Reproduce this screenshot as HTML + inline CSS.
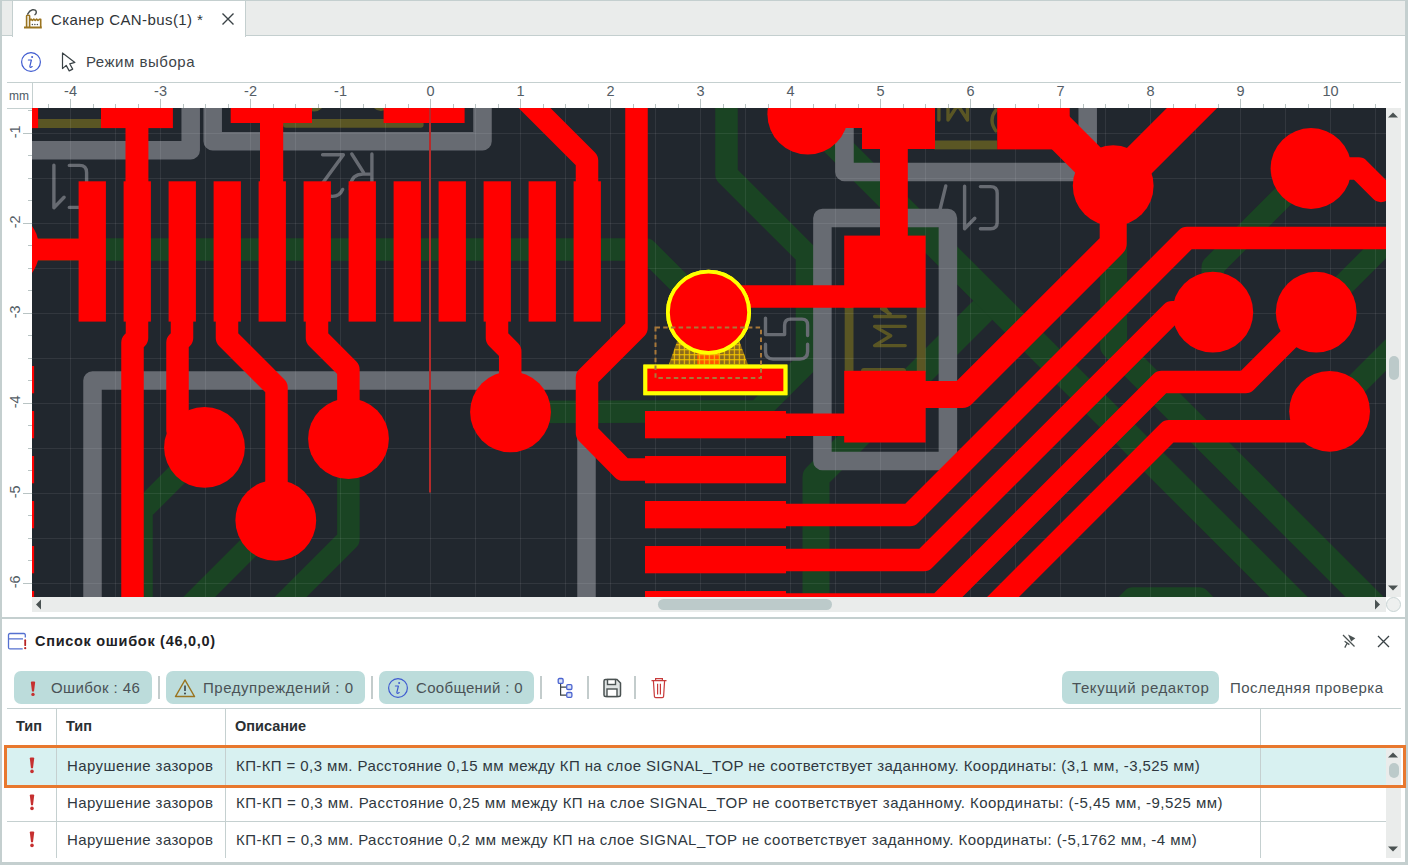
<!DOCTYPE html>
<html><head><meta charset="utf-8">
<style>
*{margin:0;padding:0;box-sizing:border-box}
html,body{width:1408px;height:865px;overflow:hidden;background:#fff;font-family:"Liberation Sans",sans-serif;color:#3d4448}
.a{position:absolute}
.t{position:absolute;white-space:nowrap;line-height:1}
.btn{position:absolute;background:#bcdcdb;border-radius:7px}
.sep{position:absolute;width:2px;background:#c3cccc}
.vl{position:absolute;width:1px;background:#c5d0d0}
.hl{position:absolute;height:1px;background:#c5d0d0}
</style></head><body>
<!-- borders -->
<div class="a" style="left:0;top:0;width:1408px;height:1px;background:#c4cfcf"></div>
<div class="a" style="left:0;top:0;width:2px;height:865px;background:#c4cfcf"></div>
<div class="a" style="left:1405px;top:0;width:3px;height:865px;background:#c4cfcf"></div>
<div class="a" style="left:0;top:862px;width:1408px;height:3px;background:#c4cfcf"></div>
<!-- tab bar -->
<div class="a" style="left:2px;top:1px;width:1403px;height:35px;background:#eaeceb;border-bottom:1px solid #c4cfcf"></div>
<div class="a" style="left:12px;top:1px;width:234px;height:36px;background:#fff;border-left:1px solid #c4cfcf;border-right:1px solid #c4cfcf"></div>
<div id="tabtitle" class="t" style="letter-spacing:0.42px;left:51px;top:12px;font-size:15px;color:#2f3538">Сканер CAN-bus(1) *</div>
<!-- factory icon -->
<svg class="a" style="left:22px;top:7px" width="22" height="22" viewBox="0 0 22 22"><path d="M4.6 20.3 L4.6 9 Q4.6 8.3 5.3 8.3 L6.9 8.3 Q7.6 8.3 7.6 9 L7.6 20.3" fill="none" stroke="#9a7420" stroke-width="1.6"/><path d="M7.6 13.5 L9 12.2 L10.4 13.5 L11.8 12.2 L13.2 13.5 L14.6 12.2 L16 13.5 L17.6 12.2 L18.7 12.2 L18.7 20.3" fill="none" stroke="#9a7420" stroke-width="1.6" stroke-linejoin="round"/><path d="M2 20.5 L19.8 20.5" stroke="#9a7420" stroke-width="2"/><circle cx="10.4" cy="17.5" r="0.75" fill="#4a5050"/><circle cx="12.9" cy="17.5" r="0.75" fill="#4a5050"/><circle cx="15.4" cy="17.5" r="0.75" fill="#4a5050"/><path d="M5.7 7 Q7.5 3.5 10.5 2.8 Q14 2.3 14.3 5 Q14.3 7 13 7.6" fill="none" stroke="#4a5050" stroke-width="1.5" stroke-linecap="round"/></svg>
<svg class="a" style="left:221px;top:12px" width="14" height="14" viewBox="0 0 14 14"><path d="M1.5 1.5 L12.5 12.5 M12.5 1.5 L1.5 12.5" stroke="#3a4246" stroke-width="1.4"/></svg>
<!-- toolbar -->
<svg class="a" style="left:20px;top:51px" width="22" height="22" viewBox="0 0 22 22"><circle cx="11" cy="11" r="9.4" fill="none" stroke="#3f5bd0" stroke-width="1.2"/><path d="M8.4 9 L11.4 9 L9.9 15.2 Q9.6 16.6 11 16.3 L12.2 15.6" fill="none" stroke="#3f5bd0" stroke-width="1.2" stroke-linejoin="round" stroke-linecap="round"/><circle cx="12.1" cy="5.9" r="1" fill="#3f5bd0"/></svg>
<svg class="a" style="left:60px;top:52px" width="18" height="20" viewBox="0 0 18 20"><path d="M2.5 1 L2.5 16.6 L6.2 13.4 L9.2 18.9 L12.7 17.1 L9.7 11.8 L14.9 10.4 Z" fill="none" stroke="#3a4246" stroke-width="1.2" stroke-linejoin="round"/></svg>
<div id="mode" class="t" style="letter-spacing:0.52px;left:86px;top:54px;font-size:15px;color:#3d4448">Режим выбора</div>
<!-- ruler -->
<div class="hl" style="left:7px;top:82px;width:1394px"></div>
<div class="hl" style="left:7px;top:108px;width:25px"></div>
<div class="vl" style="left:32px;top:83px;height:25px"></div>
<div class="t" style="left:9px;top:90px;font-size:12px;color:#4d5a66">mm</div>
<svg class="a" style="left:0;top:0" width="1408" height="865" viewBox="0 0 1408 865">
<rect x="48" y="104" width="1" height="4" fill="#b9c4c4"/>
<rect x="70" y="99" width="1" height="9" fill="#b9c4c4"/>
<text x="70.5" y="96" text-anchor="middle" font-size="14.5" fill="#545d66">-4</text>
<rect x="93" y="104" width="1" height="4" fill="#b9c4c4"/>
<rect x="115" y="104" width="1" height="4" fill="#b9c4c4"/>
<rect x="138" y="104" width="1" height="4" fill="#b9c4c4"/>
<rect x="160" y="99" width="1" height="9" fill="#b9c4c4"/>
<text x="160.5" y="96" text-anchor="middle" font-size="14.5" fill="#545d66">-3</text>
<rect x="183" y="104" width="1" height="4" fill="#b9c4c4"/>
<rect x="205" y="104" width="1" height="4" fill="#b9c4c4"/>
<rect x="228" y="104" width="1" height="4" fill="#b9c4c4"/>
<rect x="250" y="99" width="1" height="9" fill="#b9c4c4"/>
<text x="250.5" y="96" text-anchor="middle" font-size="14.5" fill="#545d66">-2</text>
<rect x="273" y="104" width="1" height="4" fill="#b9c4c4"/>
<rect x="295" y="104" width="1" height="4" fill="#b9c4c4"/>
<rect x="318" y="104" width="1" height="4" fill="#b9c4c4"/>
<rect x="340" y="99" width="1" height="9" fill="#b9c4c4"/>
<text x="340.5" y="96" text-anchor="middle" font-size="14.5" fill="#545d66">-1</text>
<rect x="363" y="104" width="1" height="4" fill="#b9c4c4"/>
<rect x="385" y="104" width="1" height="4" fill="#b9c4c4"/>
<rect x="408" y="104" width="1" height="4" fill="#b9c4c4"/>
<rect x="430" y="99" width="1" height="9" fill="#b9c4c4"/>
<text x="430.5" y="96" text-anchor="middle" font-size="14.5" fill="#545d66">0</text>
<rect x="453" y="104" width="1" height="4" fill="#b9c4c4"/>
<rect x="475" y="104" width="1" height="4" fill="#b9c4c4"/>
<rect x="498" y="104" width="1" height="4" fill="#b9c4c4"/>
<rect x="520" y="99" width="1" height="9" fill="#b9c4c4"/>
<text x="520.5" y="96" text-anchor="middle" font-size="14.5" fill="#545d66">1</text>
<rect x="543" y="104" width="1" height="4" fill="#b9c4c4"/>
<rect x="565" y="104" width="1" height="4" fill="#b9c4c4"/>
<rect x="588" y="104" width="1" height="4" fill="#b9c4c4"/>
<rect x="610" y="99" width="1" height="9" fill="#b9c4c4"/>
<text x="610.5" y="96" text-anchor="middle" font-size="14.5" fill="#545d66">2</text>
<rect x="633" y="104" width="1" height="4" fill="#b9c4c4"/>
<rect x="655" y="104" width="1" height="4" fill="#b9c4c4"/>
<rect x="678" y="104" width="1" height="4" fill="#b9c4c4"/>
<rect x="700" y="99" width="1" height="9" fill="#b9c4c4"/>
<text x="700.5" y="96" text-anchor="middle" font-size="14.5" fill="#545d66">3</text>
<rect x="723" y="104" width="1" height="4" fill="#b9c4c4"/>
<rect x="745" y="104" width="1" height="4" fill="#b9c4c4"/>
<rect x="768" y="104" width="1" height="4" fill="#b9c4c4"/>
<rect x="790" y="99" width="1" height="9" fill="#b9c4c4"/>
<text x="790.5" y="96" text-anchor="middle" font-size="14.5" fill="#545d66">4</text>
<rect x="813" y="104" width="1" height="4" fill="#b9c4c4"/>
<rect x="835" y="104" width="1" height="4" fill="#b9c4c4"/>
<rect x="858" y="104" width="1" height="4" fill="#b9c4c4"/>
<rect x="880" y="99" width="1" height="9" fill="#b9c4c4"/>
<text x="880.5" y="96" text-anchor="middle" font-size="14.5" fill="#545d66">5</text>
<rect x="903" y="104" width="1" height="4" fill="#b9c4c4"/>
<rect x="925" y="104" width="1" height="4" fill="#b9c4c4"/>
<rect x="948" y="104" width="1" height="4" fill="#b9c4c4"/>
<rect x="970" y="99" width="1" height="9" fill="#b9c4c4"/>
<text x="970.5" y="96" text-anchor="middle" font-size="14.5" fill="#545d66">6</text>
<rect x="993" y="104" width="1" height="4" fill="#b9c4c4"/>
<rect x="1015" y="104" width="1" height="4" fill="#b9c4c4"/>
<rect x="1038" y="104" width="1" height="4" fill="#b9c4c4"/>
<rect x="1060" y="99" width="1" height="9" fill="#b9c4c4"/>
<text x="1060.5" y="96" text-anchor="middle" font-size="14.5" fill="#545d66">7</text>
<rect x="1083" y="104" width="1" height="4" fill="#b9c4c4"/>
<rect x="1105" y="104" width="1" height="4" fill="#b9c4c4"/>
<rect x="1128" y="104" width="1" height="4" fill="#b9c4c4"/>
<rect x="1150" y="99" width="1" height="9" fill="#b9c4c4"/>
<text x="1150.5" y="96" text-anchor="middle" font-size="14.5" fill="#545d66">8</text>
<rect x="1173" y="104" width="1" height="4" fill="#b9c4c4"/>
<rect x="1195" y="104" width="1" height="4" fill="#b9c4c4"/>
<rect x="1218" y="104" width="1" height="4" fill="#b9c4c4"/>
<rect x="1240" y="99" width="1" height="9" fill="#b9c4c4"/>
<text x="1240.5" y="96" text-anchor="middle" font-size="14.5" fill="#545d66">9</text>
<rect x="1263" y="104" width="1" height="4" fill="#b9c4c4"/>
<rect x="1285" y="104" width="1" height="4" fill="#b9c4c4"/>
<rect x="1308" y="104" width="1" height="4" fill="#b9c4c4"/>
<rect x="1330" y="99" width="1" height="9" fill="#b9c4c4"/>
<text x="1330.5" y="96" text-anchor="middle" font-size="14.5" fill="#545d66">10</text>
<rect x="1353" y="104" width="1" height="4" fill="#b9c4c4"/>
<rect x="1375" y="104" width="1" height="4" fill="#b9c4c4"/>
<rect x="28" y="110" width="4" height="1" fill="#b9c4c4"/>
<rect x="23" y="133" width="9" height="1" fill="#b9c4c4"/>
<text transform="translate(19.6 131.9) rotate(-90)" text-anchor="middle" font-size="14.5" fill="#545d66">-1</text>
<rect x="28" y="155" width="4" height="1" fill="#b9c4c4"/>
<rect x="28" y="178" width="4" height="1" fill="#b9c4c4"/>
<rect x="28" y="200" width="4" height="1" fill="#b9c4c4"/>
<rect x="28" y="110" width="4" height="1" fill="#b9c4c4"/>
<rect x="23" y="223" width="9" height="1" fill="#b9c4c4"/>
<text transform="translate(19.6 221.9) rotate(-90)" text-anchor="middle" font-size="14.5" fill="#545d66">-2</text>
<rect x="28" y="245" width="4" height="1" fill="#b9c4c4"/>
<rect x="28" y="268" width="4" height="1" fill="#b9c4c4"/>
<rect x="28" y="290" width="4" height="1" fill="#b9c4c4"/>
<rect x="23" y="313" width="9" height="1" fill="#b9c4c4"/>
<text transform="translate(19.6 311.9) rotate(-90)" text-anchor="middle" font-size="14.5" fill="#545d66">-3</text>
<rect x="28" y="335" width="4" height="1" fill="#b9c4c4"/>
<rect x="28" y="358" width="4" height="1" fill="#b9c4c4"/>
<rect x="28" y="380" width="4" height="1" fill="#b9c4c4"/>
<rect x="23" y="403" width="9" height="1" fill="#b9c4c4"/>
<text transform="translate(19.6 401.9) rotate(-90)" text-anchor="middle" font-size="14.5" fill="#545d66">-4</text>
<rect x="28" y="425" width="4" height="1" fill="#b9c4c4"/>
<rect x="28" y="448" width="4" height="1" fill="#b9c4c4"/>
<rect x="28" y="470" width="4" height="1" fill="#b9c4c4"/>
<rect x="23" y="493" width="9" height="1" fill="#b9c4c4"/>
<text transform="translate(19.6 491.9) rotate(-90)" text-anchor="middle" font-size="14.5" fill="#545d66">-5</text>
<rect x="28" y="515" width="4" height="1" fill="#b9c4c4"/>
<rect x="28" y="538" width="4" height="1" fill="#b9c4c4"/>
<rect x="28" y="560" width="4" height="1" fill="#b9c4c4"/>
<rect x="23" y="583" width="9" height="1" fill="#b9c4c4"/>
<text transform="translate(19.6 581.9) rotate(-90)" text-anchor="middle" font-size="14.5" fill="#545d66">-6</text>
</svg>
<!-- canvas placeholder -->
<svg class="a" style="left:32px;top:108px" width="1354" height="489" viewBox="32 108 1354 489">
<rect x="32" y="108" width="1354" height="489" fill="#21272e" />
<path d="M20 249.5 L646 249.5 L708.5 312" fill="none" stroke="#1a4423" stroke-width="22.5" stroke-linejoin="round" stroke-linecap="round" />
<path d="M204.5 447.4 L141.5 510.4 L141.5 620" fill="none" stroke="#1a4423" stroke-width="22.5" stroke-linejoin="round" stroke-linecap="round" />
<path d="M275.8 520.4 L180 616.2" fill="none" stroke="#1a4423" stroke-width="22.5" stroke-linejoin="round" stroke-linecap="round" />
<path d="M348.4 438.7 L348.4 539.2 L270 617.6" fill="none" stroke="#1a4423" stroke-width="22.5" stroke-linejoin="round" stroke-linecap="round" />
<path d="M510.5 411.9 L758 411.2 L807 362.2 L807 255 L726.5 174.5 L726.5 90" fill="none" stroke="#1a4423" stroke-width="22.5" stroke-linejoin="round" stroke-linecap="round" />
<path d="M816 620 L816 477 L992.3 300.7" fill="none" stroke="#1a4423" stroke-width="27" stroke-linejoin="round" stroke-linecap="round" />
<path d="M830 138.4 L1420 728.4" fill="none" stroke="#1a4423" stroke-width="27" stroke-linejoin="round" stroke-linecap="round" />
<path d="M1113.6 200 L1113.6 346 L1420 652.4" fill="none" stroke="#1a4423" stroke-width="27" stroke-linejoin="round" stroke-linecap="round" />
<path d="M1212.8 312.2 L1212.8 266.7 L1311 168.5" fill="none" stroke="#1a4423" stroke-width="22.5" stroke-linejoin="round" stroke-linecap="round" />
<path d="M1316.2 312.2 L1420 208.4" fill="none" stroke="#1a4423" stroke-width="22.5" stroke-linejoin="round" stroke-linecap="round" />
<path d="M1329.6 411.3 L1420 320.9" fill="none" stroke="#1a4423" stroke-width="22.5" stroke-linejoin="round" stroke-linecap="round" />
<path d="M1080 652 L1133 598.5 L1199 598.5 L1252 652" fill="none" stroke="#1a4423" stroke-width="22.5" stroke-linejoin="round" stroke-linecap="round" />
<path d="M20 150.2 L190.7 150.2 L190.7 90" fill="none" stroke="#676b72" stroke-width="18.5" stroke-linejoin="round" stroke-linecap="butt" />
<path d="M212.7 90 L212.7 141.2 L482.5 141.2 L482.5 90" fill="none" stroke="#676b72" stroke-width="18.5" stroke-linejoin="round" stroke-linecap="butt" />
<path d="M92.5 620 L92.5 380.5 L586.5 380.5 L586.5 620" fill="none" stroke="#676b72" stroke-width="18.5" stroke-linejoin="round" stroke-linecap="butt" />
<path d="M844.5 90 L844.5 172 L1087.7 172 L1087.7 90" fill="none" stroke="#676b72" stroke-width="18.5" stroke-linejoin="round" stroke-linecap="butt" />
<path d="M822.4 218 L947.9 218 L947.9 461 L822.4 461 Z" fill="none" stroke="#676b72" stroke-width="18.5" stroke-linejoin="round"/>
<rect x="38" y="119" width="134" height="9" fill="#5a5624" />
<rect x="283" y="119" width="140.6" height="8.7" rx="3" fill="#5a5624"/>
<rect x="934.5" y="140.5" width="62.7" height="8.9" fill="#5a5624" />
<rect x="844.7" y="300" width="8.8" height="72" fill="#5a5624" />
<rect x="916.8" y="300" width="8.8" height="72" fill="#5a5624" />
<path d="M53.9 165.3 L53.9 207.7 L64.1 197.3" fill="none" stroke="#676b72" stroke-width="3.4" stroke-linecap="round" stroke-linejoin="round"/>
<path d="M69.3 165.4 L79.5 165.4 Q86.6 165.4 86.6 172.5 L86.6 200 Q86.6 207.4 79.5 207.4 L69.3 207.4" fill="none" stroke="#676b72" stroke-width="3.4" stroke-linecap="round" stroke-linejoin="round"/>
<path d="M322.6 154.7 L343.4 154.7 L322 184 M331 196.3 Q339.5 197 342.7 189.4" fill="none" stroke="#676b72" stroke-width="3.4" stroke-linecap="round" stroke-linejoin="round"/>
<path d="M371.9 154 L371.9 190 M351.8 154 L363.6 172.7 M371.9 174.1 L363 174.1 Q351.5 174.1 350.5 186 L350.5 190" fill="none" stroke="#676b72" stroke-width="3.4" stroke-linecap="round" stroke-linejoin="round"/>
<path d="M945.8 185.9 L939.9 210" fill="none" stroke="#676b72" stroke-width="3.4" stroke-linecap="round" stroke-linejoin="round"/>
<path d="M964.6 186.2 L964.6 228.8 L974.8 218.2" fill="none" stroke="#676b72" stroke-width="3.4" stroke-linecap="round" stroke-linejoin="round"/>
<path d="M980.4 186.6 L990.6 186.6 Q997.2 186.6 997.2 193.2 L997.2 222.2 Q997.2 228.8 990.6 228.8 L980.4 228.8" fill="none" stroke="#676b72" stroke-width="3.4" stroke-linecap="round" stroke-linejoin="round"/>
<path d="M765.5 318.1 L765.5 334.6 L784.6 334.6 L784.6 325.5 Q784.6 319.1 790.4 319.1 L802 319.1 Q807.6 319.1 807.6 324.9 L807.6 335.6" fill="none" stroke="#676b72" stroke-width="3.4" stroke-linecap="round" stroke-linejoin="round"/>
<path d="M765.5 344.3 L765.5 351.5 Q765.5 359 773 359 L800 359 Q807.6 359 807.6 351.5 L807.6 344.3" fill="none" stroke="#676b72" stroke-width="3.4" stroke-linecap="round" stroke-linejoin="round"/>
<path d="M905.2 326.4 L874.6 326.4 L890.7 335.8 L874.6 345.6 L905.2 345.6" fill="none" stroke="#5a5624" stroke-width="3.4" stroke-linecap="round" stroke-linejoin="round"/>
<path d="M905.2 316.5 L874.6 316.5 M881.8 308.7 L890.2 314 M890 316 L880 300" fill="none" stroke="#5a5624" stroke-width="3.4" stroke-linecap="round" stroke-linejoin="round"/>
<path d="M938.9 100 L938.9 120 M948 100 L948 120 L957.7 105 L967.5 120 L967.5 100" fill="none" stroke="#5a5624" stroke-width="3.4" stroke-linecap="round" stroke-linejoin="round"/>
<path d="M996 110 Q988 120 996 131" fill="none" stroke="#5a5624" stroke-width="3.4" stroke-linecap="round"/>
<circle cx="314" cy="101" r="10.5" fill="#5a5624" />
<circle cx="381" cy="101" r="10" fill="#5a5624" />
<rect x="861" y="368" width="45" height="6" rx="3" fill="#5a5624"/>
<rect x="70" y="108" width="1" height="489" fill="#ffffff" fill-opacity="0.08"/>
<rect x="115" y="108" width="1" height="489" fill="#ffffff" fill-opacity="0.08"/>
<rect x="160" y="108" width="1" height="489" fill="#ffffff" fill-opacity="0.08"/>
<rect x="205" y="108" width="1" height="489" fill="#ffffff" fill-opacity="0.08"/>
<rect x="250" y="108" width="1" height="489" fill="#ffffff" fill-opacity="0.08"/>
<rect x="295" y="108" width="1" height="489" fill="#ffffff" fill-opacity="0.08"/>
<rect x="340" y="108" width="1" height="489" fill="#ffffff" fill-opacity="0.08"/>
<rect x="385" y="108" width="1" height="489" fill="#ffffff" fill-opacity="0.08"/>
<rect x="430" y="108" width="1" height="489" fill="#ffffff" fill-opacity="0.08"/>
<rect x="475" y="108" width="1" height="489" fill="#ffffff" fill-opacity="0.08"/>
<rect x="520" y="108" width="1" height="489" fill="#ffffff" fill-opacity="0.08"/>
<rect x="565" y="108" width="1" height="489" fill="#ffffff" fill-opacity="0.08"/>
<rect x="610" y="108" width="1" height="489" fill="#ffffff" fill-opacity="0.08"/>
<rect x="655" y="108" width="1" height="489" fill="#ffffff" fill-opacity="0.08"/>
<rect x="700" y="108" width="1" height="489" fill="#ffffff" fill-opacity="0.08"/>
<rect x="745" y="108" width="1" height="489" fill="#ffffff" fill-opacity="0.08"/>
<rect x="790" y="108" width="1" height="489" fill="#ffffff" fill-opacity="0.08"/>
<rect x="835" y="108" width="1" height="489" fill="#ffffff" fill-opacity="0.08"/>
<rect x="880" y="108" width="1" height="489" fill="#ffffff" fill-opacity="0.08"/>
<rect x="925" y="108" width="1" height="489" fill="#ffffff" fill-opacity="0.08"/>
<rect x="970" y="108" width="1" height="489" fill="#ffffff" fill-opacity="0.08"/>
<rect x="1015" y="108" width="1" height="489" fill="#ffffff" fill-opacity="0.08"/>
<rect x="1060" y="108" width="1" height="489" fill="#ffffff" fill-opacity="0.08"/>
<rect x="1105" y="108" width="1" height="489" fill="#ffffff" fill-opacity="0.08"/>
<rect x="1150" y="108" width="1" height="489" fill="#ffffff" fill-opacity="0.08"/>
<rect x="1195" y="108" width="1" height="489" fill="#ffffff" fill-opacity="0.08"/>
<rect x="1240" y="108" width="1" height="489" fill="#ffffff" fill-opacity="0.08"/>
<rect x="1285" y="108" width="1" height="489" fill="#ffffff" fill-opacity="0.08"/>
<rect x="1330" y="108" width="1" height="489" fill="#ffffff" fill-opacity="0.08"/>
<rect x="1375" y="108" width="1" height="489" fill="#ffffff" fill-opacity="0.08"/>
<rect x="32" y="133" width="1354" height="1" fill="#ffffff" fill-opacity="0.08"/>
<rect x="32" y="178" width="1354" height="1" fill="#ffffff" fill-opacity="0.08"/>
<rect x="32" y="223" width="1354" height="1" fill="#ffffff" fill-opacity="0.08"/>
<rect x="32" y="268" width="1354" height="1" fill="#ffffff" fill-opacity="0.08"/>
<rect x="32" y="313" width="1354" height="1" fill="#ffffff" fill-opacity="0.08"/>
<rect x="32" y="358" width="1354" height="1" fill="#ffffff" fill-opacity="0.08"/>
<rect x="32" y="403" width="1354" height="1" fill="#ffffff" fill-opacity="0.08"/>
<rect x="32" y="448" width="1354" height="1" fill="#ffffff" fill-opacity="0.08"/>
<rect x="32" y="493" width="1354" height="1" fill="#ffffff" fill-opacity="0.08"/>
<rect x="32" y="538" width="1354" height="1" fill="#ffffff" fill-opacity="0.08"/>
<rect x="32" y="583" width="1354" height="1" fill="#ffffff" fill-opacity="0.08"/>
<rect x="78.6" y="181.3" width="27.3" height="140.3" fill="#ff0000" />
<rect x="123.6" y="181.3" width="27.3" height="140.3" fill="#ff0000" />
<rect x="168.6" y="181.3" width="27.3" height="140.3" fill="#ff0000" />
<rect x="213.6" y="181.3" width="27.3" height="140.3" fill="#ff0000" />
<rect x="258.6" y="181.3" width="27.3" height="140.3" fill="#ff0000" />
<rect x="303.6" y="181.3" width="27.3" height="140.3" fill="#ff0000" />
<rect x="348.6" y="181.3" width="27.3" height="140.3" fill="#ff0000" />
<rect x="393.6" y="181.3" width="27.3" height="140.3" fill="#ff0000" />
<rect x="438.6" y="181.3" width="27.3" height="140.3" fill="#ff0000" />
<rect x="483.6" y="181.3" width="27.3" height="140.3" fill="#ff0000" />
<rect x="528.6" y="181.3" width="27.3" height="140.3" fill="#ff0000" />
<rect x="573.6" y="181.3" width="27.3" height="140.3" fill="#ff0000" />
<rect x="32" y="108" width="6.1" height="20.1" fill="#ff0000" />
<rect x="101" y="100" width="71.9" height="28.1" fill="#ff0000" />
<rect x="125.5" y="128" width="22.9" height="54" fill="#ff0000" />
<rect x="230.7" y="100" width="81.3" height="23" fill="#ff0000" />
<rect x="260" y="122" width="23.2" height="60" fill="#ff0000" />
<rect x="383.6" y="100" width="81" height="23" fill="#ff0000" />
<rect x="30" y="238.6" width="49" height="21.8" fill="#ff0000" />
<circle cx="-1" cy="249.5" r="40.5" fill="#ff0000" />
<path d="M137 321 L137 338 L132.5 342.5 L132.5 620" fill="none" stroke="#ff0000" stroke-width="22.5" stroke-linejoin="round" stroke-linecap="round" />
<path d="M182 321 L182 338 L177.5 342.5 L177.5 430" fill="none" stroke="#ff0000" stroke-width="22.5" stroke-linejoin="round" stroke-linecap="round" />
<path d="M227 321 L227 338 L276.5 387.5 L276.5 520" fill="none" stroke="#ff0000" stroke-width="22.5" stroke-linejoin="round" stroke-linecap="round" />
<path d="M317 321 L317 338 L348.4 369.4 L348.4 440" fill="none" stroke="#ff0000" stroke-width="22.5" stroke-linejoin="round" stroke-linecap="round" />
<path d="M497 321 L497 338 L510.2 351.2 L510.2 412" fill="none" stroke="#ff0000" stroke-width="22.5" stroke-linejoin="round" stroke-linecap="round" />
<path d="M505 78.5 L587 160.5 L587 190" fill="none" stroke="#ff0000" stroke-width="22.5" stroke-linejoin="round" stroke-linecap="round" />
<path d="M636.5 90 L636.5 328 L587 377.5 L587 433 L623 469.5 L660 469.5" fill="none" stroke="#ff0000" stroke-width="22.5" stroke-linejoin="round" stroke-linecap="round" />
<path d="M708.5 296.6 L850 296.6" fill="none" stroke="#ff0000" stroke-width="22.5" stroke-linejoin="round" stroke-linecap="round" />
<path d="M780 424.8 L850 424.8" fill="none" stroke="#ff0000" stroke-width="22.5" stroke-linejoin="round" stroke-linecap="round" />
<path d="M780 515 L910 515 L1187 238 L1420 238" fill="none" stroke="#ff0000" stroke-width="22.5" stroke-linejoin="round" stroke-linecap="round" />
<path d="M780 560 L924 560 L1172 312.2 L1212.8 312.2" fill="none" stroke="#ff0000" stroke-width="22.5" stroke-linejoin="round" stroke-linecap="round" />
<path d="M780 604.5 L939 604.5 L1161.5 382 L1245.7 382 L1316.2 311.5" fill="none" stroke="#ff0000" stroke-width="22.5" stroke-linejoin="round" stroke-linecap="round" />
<path d="M780 649.5 L950.5 649.5 L1168.8 431.2 L1330 431.2" fill="none" stroke="#ff0000" stroke-width="22.5" stroke-linejoin="round" stroke-linecap="round" />
<path d="M920 394.4 L962.4 394.4 L1113.2 243.8 L1113.2 185.7" fill="none" stroke="#ff0000" stroke-width="27" stroke-linejoin="round" stroke-linecap="round" />
<path d="M1030 102.2 L1113.2 185.4" fill="none" stroke="#ff0000" stroke-width="35.8" stroke-linejoin="round" stroke-linecap="round" />
<path d="M1113.2 186.8 L1300 0" fill="none" stroke="#ff0000" stroke-width="35.5" stroke-linejoin="round" stroke-linecap="round" />
<path d="M1311 168.6 L1358.7 168.6 L1381 190.9" fill="none" stroke="#ff0000" stroke-width="22.5" stroke-linejoin="round" stroke-linecap="round" />
<circle cx="204.5" cy="447.4" r="40.4" fill="#ff0000" />
<circle cx="275.8" cy="520.4" r="40.4" fill="#ff0000" />
<circle cx="348.5" cy="438.7" r="40.4" fill="#ff0000" />
<circle cx="510.5" cy="411.9" r="40.4" fill="#ff0000" />
<circle cx="807.8" cy="114.2" r="40.4" fill="#ff0000" />
<circle cx="1113.2" cy="185.7" r="40.4" fill="#ff0000" />
<circle cx="1311" cy="168.5" r="40.4" fill="#ff0000" />
<circle cx="1212.8" cy="312.2" r="40.4" fill="#ff0000" />
<circle cx="1316.2" cy="312.2" r="40.4" fill="#ff0000" />
<circle cx="1329.6" cy="411.3" r="40.4" fill="#ff0000" />
<rect x="808" y="100" width="127" height="28" fill="#ff0000" />
<rect x="862" y="100" width="73" height="49" fill="#ff0000" />
<rect x="880" y="148" width="27.8" height="88" fill="#ff0000" />
<rect x="844.2" y="235.6" width="81.4" height="72.1" fill="#ff0000" />
<rect x="844.2" y="370.8" width="81.4" height="71.7" fill="#ff0000" />
<rect x="997.2" y="100" width="72.5" height="49.4" fill="#ff0000" />
<rect x="645" y="366" width="141" height="27.3" fill="#ff0000" />
<rect x="30" y="366" width="4.1" height="27.3" fill="#ff0000" />
<rect x="645" y="411" width="141" height="27.3" fill="#ff0000" />
<rect x="30" y="411" width="4.1" height="27.3" fill="#ff0000" />
<rect x="645" y="456" width="141" height="27.3" fill="#ff0000" />
<rect x="30" y="456" width="4.1" height="27.3" fill="#ff0000" />
<rect x="645" y="501" width="141" height="27.3" fill="#ff0000" />
<rect x="30" y="501" width="4.1" height="27.3" fill="#ff0000" />
<rect x="645" y="546" width="141" height="27.3" fill="#ff0000" />
<rect x="30" y="546" width="4.1" height="27.3" fill="#ff0000" />
<rect x="645" y="591" width="141" height="27.3" fill="#ff0000" />
<rect x="30" y="591" width="4.1" height="27.3" fill="#ff0000" />
<circle cx="708.5" cy="312.2" r="40.6" fill="#ff0000" stroke="#ffff00" stroke-width="3.8"/>
<rect x="645.3" y="366.5" width="140.2" height="26.8" fill="#ff0000" stroke="#ffff00" stroke-width="3.8"/>
<defs><pattern id="hp" x="3.8" y="4.2" width="5" height="5" patternUnits="userSpaceOnUse"><rect width="5" height="5" fill="#f2c200"/><rect x="1.1" y="1.1" width="3.9" height="3.9" fill="#8b6a1e"/></pattern><pattern id="hq" x="3.8" y="4.2" width="5" height="5" patternUnits="userSpaceOnUse"><rect width="5" height="5" fill="#f2c200"/><rect x="1.1" y="1.1" width="3.9" height="3.9" fill="#ff5500"/></pattern><clipPath id="tz"><path d="M677 341.4 L739.5 341.4 L748 364.6 L668.9 364.6 Z"/></clipPath></defs>
<path d="M677 341.4 L739.5 341.4 L748 364.6 L668.9 364.6 Z" fill="url(#hp)"/>
<rect x="697.3" y="341" width="22.4" height="24" fill="url(#hq)" clip-path="url(#tz)"/>
<circle cx="708.5" cy="312.2" r="40.6" fill="#ff0000" stroke="#ffff00" stroke-width="3.8"/>
<rect x="645.3" y="366.5" width="140.2" height="26.8" fill="none" stroke="#ffff00" stroke-width="3.8"/>
<rect x="655.5" y="327.5" width="105.5" height="50.5" fill="none" stroke="#a8783a" stroke-width="2" stroke-dasharray="4.5 3.2"/>
<rect x="429" y="108" width="2" height="384.5" fill="#b52a2a" />
</svg>
<!-- scrollbars -->
<div class="a" style="left:1386px;top:108px;width:15px;height:489px;background:#eaeceb"></div>
<svg class="a" style="left:1387px;top:110px" width="12" height="9"><path d="M1 7.5 L6 2.5 L11 7.5Z" fill="#4a5252"/></svg>
<svg class="a" style="left:1387px;top:584px" width="12" height="9"><path d="M1 1.5 L6 6.5 L11 1.5Z" fill="#4a5252"/></svg>
<div class="a" style="left:1389px;top:356px;width:10px;height:24px;border-radius:5px;background:#bccaca"></div>
<div class="a" style="left:32px;top:597px;width:1354px;height:15px;background:#eaeceb"></div>
<svg class="a" style="left:33px;top:598px" width="10" height="13"><path d="M8 1.5 L3 6.5 L8 11.5Z" fill="#4a5252"/></svg>
<svg class="a" style="left:1373px;top:598px" width="10" height="13"><path d="M2 1.5 L7 6.5 L2 11.5Z" fill="#4a5252"/></svg>
<div class="a" style="left:658px;top:599px;width:174px;height:11px;border-radius:6px;background:#bccaca"></div>
<div class="a" style="left:1386px;top:597px;width:15px;height:15px;border-radius:50%;border:1px solid #c8d4d4;background:#eef0ef"></div>
<!-- panel -->
<div class="a" style="left:2px;top:617px;width:1403px;height:2px;background:#c4cfcf"></div>
<svg class="a" style="left:7px;top:632px" width="22" height="19" viewBox="0 0 22 19"><path d="M18.3 5.4 L18.3 2.9 Q18.3 1.5 16.9 1.5 L3 1.5 Q1.5 1.5 1.5 3 L1.5 15.4 Q1.5 16.9 3 16.9 L15.7 16.9 M1.5 6.8 L16 6.8" fill="none" stroke="#5570d0" stroke-width="1.3"/><path d="M18.2 8.2 L18.2 13.2" stroke="#b82424" stroke-width="1.8" stroke-linecap="round"/><circle cx="18.2" cy="16.2" r="1.1" fill="#b82424"/></svg>
<div id="ptitle" class="t" style="letter-spacing:0.7px;left:35px;top:634px;font-size:14.5px;font-weight:bold;color:#1d2124">Список ошибок (46,0,0)</div>
<svg class="a" style="left:1340px;top:632px" width="18" height="18" viewBox="0 0 18 18"><path d="M3 3 L14.5 14.5" stroke="#4a5252" stroke-width="1.3"/><path d="M8 2.6 L15.3 6.3 L11.2 9.6 Z" fill="#4a5252"/><path d="M4.6 9.2 L9.4 12.6 M7.2 11 L4.8 15.6" stroke="#4a5252" stroke-width="1.3" fill="none"/></svg>
<svg class="a" style="left:1377px;top:635px" width="13" height="13" viewBox="0 0 13 13"><path d="M1 1 L12 12 M12 1 L1 12" stroke="#3a4246" stroke-width="1.3"/></svg>

<div class="btn" style="left:14px;top:671px;width:138px;height:33px"></div>
<svg class="a" style="left:29px;top:681px" width="8" height="16" viewBox="0 0 8 16"><path d="M1.9 1.4 Q1.9 0.5 2.8 0.5 L5.2 0.5 Q6.1 0.5 6.1 1.4 L5 10.4 L3 10.4 Z" fill="#c62f2f"/><circle cx="4" cy="13.4" r="1.7" fill="#c62f2f"/></svg>
<div id="b1" class="t" style="letter-spacing:0.4px;left:51px;top:680px;font-size:15px;color:#4a5256">Ошибок : 46</div>
<div class="sep" style="left:158px;top:676px;height:23px"></div>
<div class="btn" style="left:166px;top:671px;width:199px;height:33px"></div>
<svg class="a" style="left:174px;top:678px" width="22" height="20" viewBox="0 0 22 20"><path d="M11 2 L20.5 18.5 L1.5 18.5 Z" fill="none" stroke="#9a7420" stroke-width="1.5" stroke-linejoin="round"/><path d="M11 7.5 L11 13" stroke="#3a4246" stroke-width="1.6"/><circle cx="11" cy="15.6" r="1" fill="#3a4246"/></svg>
<div id="b2" class="t" style="letter-spacing:0.53px;left:203px;top:680px;font-size:15px;color:#4a5256">Предупреждений : 0</div>
<div class="sep" style="left:371px;top:676px;height:23px"></div>
<div class="btn" style="left:379px;top:671px;width:155px;height:33px"></div>
<svg class="a" style="left:387px;top:677px" width="22" height="22" viewBox="0 0 22 22"><circle cx="11" cy="11" r="9.4" fill="none" stroke="#3f5bd0" stroke-width="1.2"/><path d="M8.4 9 L11.4 9 L9.9 15.2 Q9.6 16.6 11 16.3 L12.2 15.6" fill="none" stroke="#3f5bd0" stroke-width="1.2" stroke-linejoin="round" stroke-linecap="round"/><circle cx="12.1" cy="5.9" r="1" fill="#3f5bd0"/></svg>
<div id="b3" class="t" style="letter-spacing:0.33px;left:416px;top:680px;font-size:15px;color:#4a5256">Сообщений : 0</div>
<div class="sep" style="left:540px;top:676px;height:23px"></div>
<svg class="a" style="left:555px;top:677px" width="20" height="22" viewBox="0 0 20 22"><path d="M5.6 6.9 L5.6 18.2 L11.7 18.2 M5.6 10.1 L11.7 10.1" fill="none" stroke="#3a4246" stroke-width="1.2"/><rect x="3.2" y="1.5" width="4.9" height="4.9" rx="1.2" fill="#dde5f7" stroke="#4a63d0" stroke-width="1.3"/><rect x="11.7" y="7.7" width="5.2" height="4.8" rx="1.2" fill="#dde5f7" stroke="#4a63d0" stroke-width="1.3"/><rect x="11.7" y="15.5" width="5.2" height="4.8" rx="1.2" fill="#dde5f7" stroke="#4a63d0" stroke-width="1.3"/></svg>
<div class="sep" style="left:587px;top:676px;height:23px"></div>
<svg class="a" style="left:601px;top:677px" width="22" height="22" viewBox="0 0 22 22"><path d="M3 4 Q3 2.5 4.5 2.5 L16 2.5 L19.5 6 L19.5 18 Q19.5 19.5 18 19.5 L4.5 19.5 Q3 19.5 3 18 Z" fill="#dfe3e3" stroke="#4a5252" stroke-width="1.5"/><rect x="6.5" y="2.5" width="8" height="5" fill="#fff" stroke="#4a5252" stroke-width="1.4"/><rect x="6" y="12" width="10" height="7.5" fill="#fff" stroke="#4a5252" stroke-width="1.4"/></svg>
<div class="sep" style="left:634px;top:676px;height:23px"></div>
<svg class="a" style="left:649px;top:677px" width="20" height="22" viewBox="0 0 20 22"><path d="M2.5 3.6 L17.5 3.6 M6.6 3.6 L6.6 1.6 L13.4 1.6 L13.4 3.6 M4.4 3.6 L5.4 19.4 Q5.5 20.6 6.7 20.6 L13.3 20.6 Q14.5 20.6 14.6 19.4 L15.6 3.6 M8.6 6.8 L8.6 17.6 M11.4 6.8 L11.4 17.6" fill="none" stroke="#c83a3a" stroke-width="1.2"/></svg>

<div class="btn" style="left:1062px;top:671px;width:157px;height:33px"></div>
<div id="b4" class="t" style="letter-spacing:0.6px;left:1072px;top:680px;font-size:15px;color:#4a5256">Текущий редактор</div>
<div id="b5" class="t" style="letter-spacing:0.45px;left:1230px;top:680px;font-size:15px;color:#4a5256">Последняя проверка</div>

<!-- table -->
<div class="hl" style="left:7px;top:708px;width:1394px"></div>
<div class="vl" style="left:56px;top:709px;height:149px"></div>
<div class="vl" style="left:225px;top:709px;height:149px"></div>
<div class="vl" style="left:1260px;top:709px;height:149px"></div>
<div id="h1" class="t" style="left:16px;top:719px;font-size:14.5px;font-weight:bold;color:#2a3033">Тип</div>
<div id="h2" class="t" style="left:66px;top:719px;font-size:14.5px;font-weight:bold;color:#2a3033">Тип</div>
<div id="h3" class="t" style="left:235px;top:719px;font-size:14.5px;font-weight:bold;color:#2a3033">Описание</div>
<!-- row 1 selected -->
<div class="a" style="left:7px;top:748px;width:1379px;height:38px;background:#d8f1f1"></div>
<div class="vl" style="left:56px;top:748px;height:38px"></div>
<div class="vl" style="left:225px;top:748px;height:38px"></div>
<div class="vl" style="left:1260px;top:748px;height:38px"></div>
<div class="hl" style="left:7px;top:821px;width:1379px"></div>
<div class="a" style="left:1386px;top:747px;width:15px;height:111px;background:#eaeceb"></div>
<svg class="a" style="left:1387px;top:750px" width="12" height="9"><path d="M1 7.5 L6 2.5 L11 7.5Z" fill="#4a5252"/></svg>
<svg class="a" style="left:1387px;top:845px" width="12" height="9"><path d="M1 1.5 L6 6.5 L11 1.5Z" fill="#4a5252"/></svg>
<div class="a" style="left:1389px;top:763px;width:10px;height:15px;border-radius:5px;background:#bccaca"></div>
<div class="a" style="left:4px;top:745px;width:1402px;height:43px;border:3px solid #e8782e"></div>

<svg class="a" style="left:28px;top:757px" width="8" height="17" viewBox="0 0 8 17"><path d="M1.8 1.6 Q1.8 0.6 2.8 0.6 L5.2 0.6 Q6.2 0.6 6.2 1.6 L5 11.2 L3 11.2 Z" fill="#c62f2f"/><circle cx="4" cy="14.4" r="1.8" fill="#c62f2f"/></svg>
<svg class="a" style="left:28px;top:794px" width="8" height="17" viewBox="0 0 8 17"><path d="M1.8 1.6 Q1.8 0.6 2.8 0.6 L5.2 0.6 Q6.2 0.6 6.2 1.6 L5 11.2 L3 11.2 Z" fill="#c62f2f"/><circle cx="4" cy="14.4" r="1.8" fill="#c62f2f"/></svg>
<svg class="a" style="left:28px;top:831px" width="8" height="17" viewBox="0 0 8 17"><path d="M1.8 1.6 Q1.8 0.6 2.8 0.6 L5.2 0.6 Q6.2 0.6 6.2 1.6 L5 11.2 L3 11.2 Z" fill="#c62f2f"/><circle cx="4" cy="14.4" r="1.8" fill="#c62f2f"/></svg>
<div id="r1a" class="t" style="letter-spacing:0.42px;left:67px;top:758px;font-size:15px;color:#2f3840">Нарушение зазоров</div>
<div id="r2a" class="t" style="letter-spacing:0.42px;left:67px;top:795px;font-size:15px;color:#2f3840">Нарушение зазоров</div>
<div id="r3a" class="t" style="letter-spacing:0.42px;left:67px;top:832px;font-size:15px;color:#2f3840">Нарушение зазоров</div>
<div id="r1b" class="t" style="letter-spacing:0.4px;left:236px;top:758px;font-size:15px;color:#2f3840">КП-КП = 0,3 мм. Расстояние 0,15 мм между КП на слое SIGNAL_TOP не соответствует заданному. Координаты: (3,1 мм, -3,525 мм)</div>
<div id="r2b" class="t" style="letter-spacing:0.47px;left:236px;top:795px;font-size:15px;color:#2f3840">КП-КП = 0,3 мм. Расстояние 0,25 мм между КП на слое SIGNAL_TOP не соответствует заданному. Координаты: (-5,45 мм, -9,525 мм)</div>
<div id="r3b" class="t" style="letter-spacing:0.44px;left:236px;top:832px;font-size:15px;color:#2f3840">КП-КП = 0,3 мм. Расстояние 0,2 мм между КП на слое SIGNAL_TOP не соответствует заданному. Координаты: (-5,1762 мм, -4 мм)</div>
</body></html>
